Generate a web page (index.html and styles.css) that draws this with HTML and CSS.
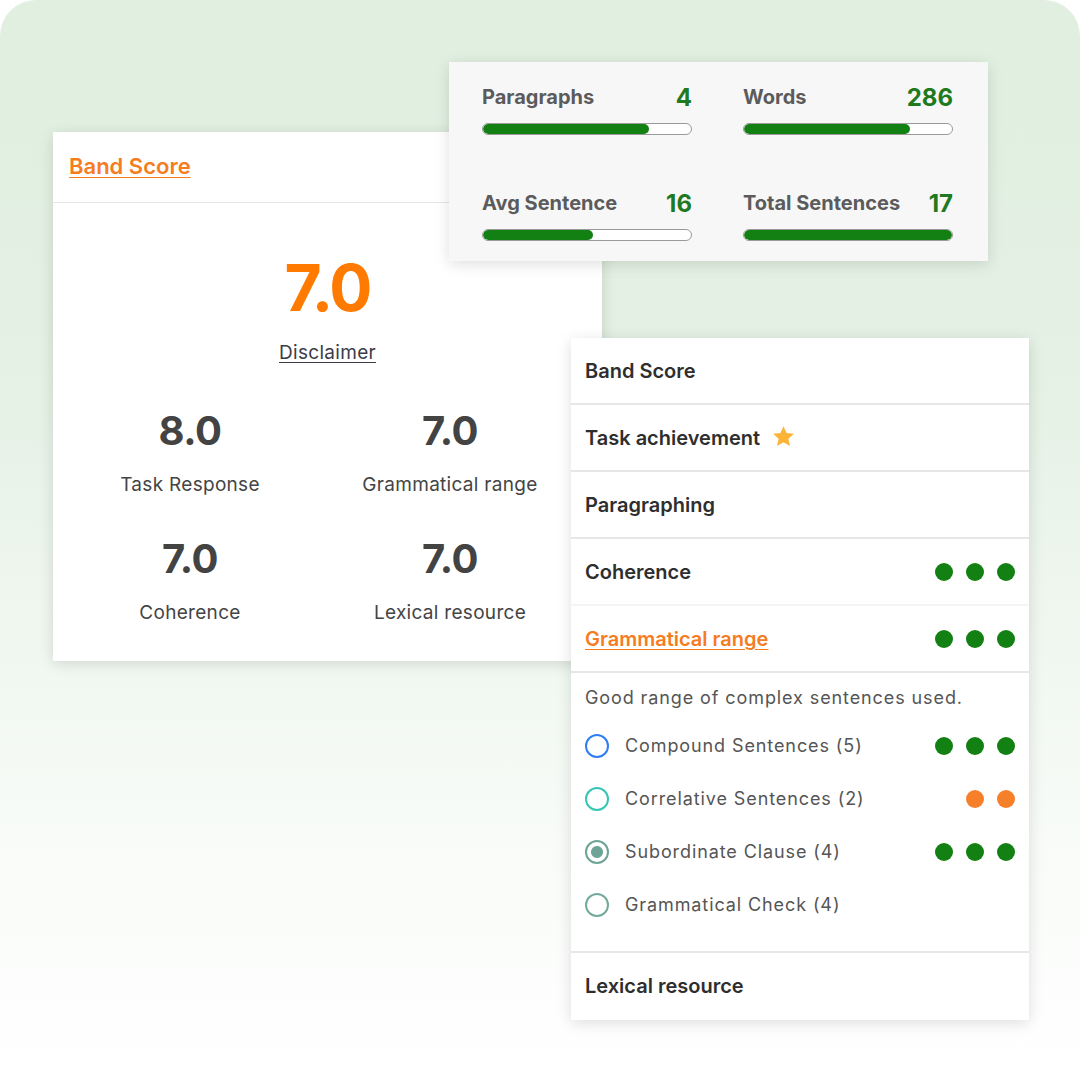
FILE: index.html
```html
<!DOCTYPE html>
<html lang="en">
<head>
<meta charset="utf-8">
<title>Band Score</title>
<link rel="stylesheet" href="styles.css">
</head>
<body>
<div class="stage">

  <section class="card score-card">
    <header class="score-head"><a class="link-orange">Band Score</a></header>
    <div class="score-body">
      <div class="overall">7.0</div>
      <a class="disclaimer">Disclaimer</a>
      <div class="sub-grid">
        <div class="sub"><div class="sub-val">8.0</div><div class="sub-label">Task Response</div></div>
        <div class="sub"><div class="sub-val">7.0</div><div class="sub-label">Grammatical range</div></div>
        <div class="sub"><div class="sub-val">7.0</div><div class="sub-label">Coherence</div></div>
        <div class="sub"><div class="sub-val">7.0</div><div class="sub-label">Lexical resource</div></div>
      </div>
    </div>
  </section>

  <section class="card stats-card">
    <div class="stat">
      <div class="stat-top"><span class="stat-label">Paragraphs</span><span class="stat-val">4</span></div>
      <div class="bar"><div class="bar-fill" style="width:80%"></div></div>
    </div>
    <div class="stat">
      <div class="stat-top"><span class="stat-label">Words</span><span class="stat-val">286</span></div>
      <div class="bar"><div class="bar-fill" style="width:80%"></div></div>
    </div>
    <div class="stat">
      <div class="stat-top"><span class="stat-label">Avg Sentence</span><span class="stat-val">16</span></div>
      <div class="bar"><div class="bar-fill" style="width:53%"></div></div>
    </div>
    <div class="stat">
      <div class="stat-top"><span class="stat-label">Total Sentences</span><span class="stat-val">17</span></div>
      <div class="bar"><div class="bar-fill" style="width:100%"></div></div>
    </div>
  </section>

  <section class="card panel">
    <div class="row"><span class="row-title">Band Score</span></div>
    <div class="row"><span class="row-title">Task achievement</span>
      <svg class="star" viewBox="0 0 24 24" width="25" height="25"><path d="M12 2.2l2.95 6.5 7.05.75-5.3 4.75 1.5 6.95L12 17.6l-6.2 3.55 1.5-6.95L2 9.45l7.05-.75z" fill="#fbb437"/></svg>
    </div>
    <div class="row"><span class="row-title">Paragraphing</span></div>
    <div class="row row-faint"><span class="row-title">Coherence</span>
      <span class="dots"><i class="dot"></i><i class="dot"></i><i class="dot"></i></span>
    </div>
    <div class="row"><a class="row-title link-orange">Grammatical range</a>
      <span class="dots"><i class="dot"></i><i class="dot"></i><i class="dot"></i></span>
    </div>
    <div class="detail">
      <p class="detail-desc">Good range of complex sentences used.</p>
      <ul class="checks">
        <li class="check"><span class="radio radio-blue"></span><span class="check-label">Compound Sentences (5)</span>
          <span class="dots"><i class="dot"></i><i class="dot"></i><i class="dot"></i></span></li>
        <li class="check"><span class="radio radio-teal"></span><span class="check-label">Correlative Sentences (2)</span>
          <span class="dots"><i class="dot dot-orange"></i><i class="dot dot-orange"></i></span></li>
        <li class="check"><span class="radio radio-on"></span><span class="check-label">Subordinate Clause (4)</span>
          <span class="dots"><i class="dot"></i><i class="dot"></i><i class="dot"></i></span></li>
        <li class="check"><span class="radio radio-sage"></span><span class="check-label">Grammatical Check (4)</span></li>
      </ul>
    </div>
    <div class="row row-last"><span class="row-title">Lexical resource</span></div>
  </section>

</div>
</body>
</html>
```
FILE: styles.css
```css
* { box-sizing: border-box; }
html, body { margin: 0; padding: 0; background: #ffffff; }
body { font-family: Inter, "Noto Sans", "Liberation Sans", sans-serif; }

.stage {
  position: relative;
  width: 1080px;
  height: 1080px;
  border-radius: 36px 36px 0 0;
  background: linear-gradient(180deg, #e0efe0 0%, #e3f0e3 30%, #eef6ee 55%, #f8fbf8 78%, #ffffff 100%);
  overflow: hidden;
}

.card {
  position: absolute;
  background: #ffffff;
  box-shadow: 0 3px 14px rgba(0, 0, 0, 0.13);
}

.link-orange {
  color: #f57c1f;
  text-decoration: underline;
  text-decoration-thickness: 1px;
  text-underline-offset: 3px;
}

/* left score card */
.score-card { left: 53px; top: 132px; width: 549px; height: 529px; }
.score-head {
  height: 71px;
  padding-left: 16px;
  padding-bottom: 3px;
  display: flex;
  align-items: center;
  border-bottom: 1px solid #e4e4e4;
  font-size: 22px;
  font-weight: 600;
}
.score-body { display: flex; flex-direction: column; align-items: center; padding-top: 50px; }
.overall {
  font-size: 64px;
  line-height: 70px;
  font-weight: 700;
  color: #ff7a00;
  letter-spacing: -2px;
}
.disclaimer {
  margin-top: 18px;
  font-size: 19px;
  line-height: 24px;
  color: #3c3c48;
  letter-spacing: 0.3px;
  text-decoration: underline;
  text-underline-offset: 3px;
}
.sub-grid {
  align-self: flex-start;
  margin-left: 7px;
  margin-top: 42px;
  display: grid;
  grid-template-columns: 260px 260px;
  row-gap: 38px;
}
.sub { display: flex; flex-direction: column; align-items: center; gap: 18px; }
.sub-val { font-size: 40px; line-height: 48px; font-weight: 700; color: #434343; letter-spacing: -0.5px; }
.sub-label { font-size: 19px; line-height: 24px; color: #444444; letter-spacing: 0.3px; }

/* stats card */
.stats-card {
  left: 449px; top: 62px; width: 539px; height: 199px;
  background: #f7f7f7;
  padding: 23px 35px 0 33px;
  display: grid;
  grid-template-columns: 210px 210px;
  column-gap: 51px;
  row-gap: 56px;
  align-content: start;
}
.stat-top { display: flex; justify-content: space-between; align-items: center; height: 24px; }
.stat-label { font-size: 20px; font-weight: 700; color: #5b5b5b; }
.stat-val { font-size: 24px; font-weight: 700; color: #1f7a1f; }
.bar {
  margin-top: 14px;
  height: 12px;
  border: 1px solid #9a9a9a;
  border-radius: 6px;
  background: #ffffff;
  overflow: hidden;
}
.bar-fill { height: 100%; background: #128012; border-radius: 6px; }

/* right panel */
.panel { left: 571px; top: 338px; width: 458px; height: 682px; display: flex; flex-direction: column; }
.row {
  height: 67px;
  flex: none;
  padding: 0 14px 0 14px;
  display: flex;
  align-items: center;
  border-bottom: 2px solid #e6e6e6;
}
.row-faint { border-bottom-color: #f4f4f4; }
.row-last { border-bottom: none; height: 66px; }
.row-title { font-size: 20px; font-weight: 600; color: #2e2e2e; }
a.row-title { color: #f57c1f; }
.star { margin-left: 11px; margin-bottom: 2px; }
.dots { margin-left: auto; display: flex; gap: 13px; }
.dot { display: block; width: 18px; height: 18px; border-radius: 50%; background: #138013; }
.dot-orange { background: #f6802a; }

.detail {
  flex: none;
  height: 280px;
  padding: 13px 14px 0 14px;
  border-bottom: 2px solid #e6e6e6;
}
.detail-desc { margin: 0; font-size: 18px; line-height: 24px; color: #555555; letter-spacing: 0.9px; }
.checks { list-style: none; margin: 9px 0 0 0; padding: 0; }
.check { height: 53px; display: flex; align-items: center; }
.radio {
  width: 24px; height: 24px; border-radius: 50%;
  border: 2px solid #3382ea;
  flex: none;
  margin-right: 16px;
}
.radio-blue { border-color: #2f7ff0; }
.radio-teal { border-color: #35c6b5; }
.radio-on { border-color: #6ea497; background: radial-gradient(circle, #6ea497 0 5.5px, #ffffff 6.5px); }
.radio-sage { border-color: #74aa9d; }
.check-label { font-size: 18px; color: #555555; letter-spacing: 0.9px; }
```
